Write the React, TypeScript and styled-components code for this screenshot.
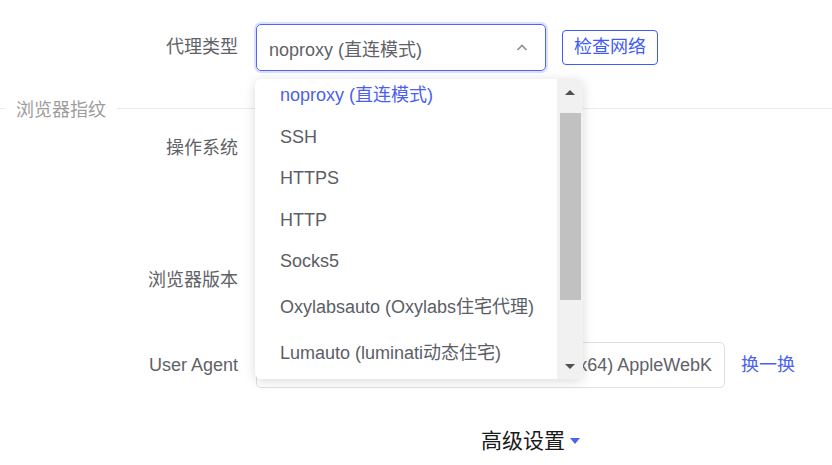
import styled, { createGlobalStyle } from "styled-components";

const GlobalStyle = createGlobalStyle`
  html, body {
    margin: 0;
    padding: 0;
    background: #fff;
  }
  body {
    font-family: "Liberation Sans", "Noto Sans CJK SC", sans-serif;
  }
`;

const options = [
  "noproxy (直连模式)",
  "SSH",
  "HTTPS",
  "HTTP",
  "Socks5",
  "Oxylabsauto (Oxylabs住宅代理)",
  "Lumauto (luminati动态住宅)",
];

const App = () => {
  return (
    <Page>
      <GlobalStyle />
      <FormItem $h={47}>
        <Label>代理类型</Label>
        <SelectBox>
          <SelectText>noproxy (直连模式)</SelectText>
          <svg width="14" height="14" viewBox="0 0 14 14">
            <polyline points="2.5,9 7,4.5 11.5,9" fill="none" stroke="#8e9096" strokeWidth="1.6" />
          </svg>
        </SelectBox>
        <OutlineButton>检查网络</OutlineButton>
      </FormItem>

      <Divider>
        <DividerLine $w="5px" />
        <DividerText>浏览器指纹</DividerText>
        <DividerLine />
      </Divider>

      <FormItem $h={132}>
        <Label>操作系统</Label>
      </FormItem>

      <FormItem $h={85}>
        <Label>浏览器版本</Label>
      </FormItem>

      <FormItem $h={46}>
        <Label>User Agent</Label>
        <TextInput>
          <span>Mozilla/5.0 (Windows NT 10.0; Win64; x64) AppleWebK</span>
        </TextInput>
        <LinkText>换一换</LinkText>
      </FormItem>

      <Advanced>
        高级设置
        <Caret />
      </Advanced>

      <Dropdown>
        <OptionList>
          {options.map((o, i) => (
            <Option key={o} $active={i === 0} $extra={i >= 5}>
              {o}
            </Option>
          ))}
        </OptionList>
        <ScrollBar>
          <ScrollArrow>
            <Tri $down={false} />
          </ScrollArrow>
          <Thumb />
          <Spacer />
          <ScrollArrow>
            <Tri $down />
          </ScrollArrow>
        </ScrollBar>
      </Dropdown>
    </Page>
  );
};

const Page = styled.div`
  position: relative;
  width: 832px;
  height: 465px;
  overflow: hidden;
  padding-top: 24px;
  box-sizing: border-box;
`;

const FormItem = styled.div<{ $h: number }>`
  display: flex;
  align-items: flex-start;
  min-height: ${(p) => p.$h}px;
`;

const Label = styled.div`
  width: 256px;
  padding-right: 18px;
  box-sizing: border-box;
  text-align: right;
  font-size: 18px;
  line-height: 46px;
  color: #606266;
  flex-shrink: 0;
`;

const SelectBox = styled.div`
  width: 290px;
  height: 47px;
  box-sizing: border-box;
  border: 1px solid #4f66f0;
  border-radius: 5px;
  box-shadow: 0 0 0 2px rgba(79, 102, 240, 0.2);
  display: flex;
  align-items: center;
  padding: 0 16px 0 12px;
  color: #606266;
  font-size: 18px;
`;

const SelectText = styled.span`
  flex: 1;
`;

const OutlineButton = styled.div`
  margin: 6px 0 0 16px;
  height: 35px;
  box-sizing: border-box;
  padding: 0 11px;
  border: 1px solid #3e5cf5;
  border-radius: 4px;
  color: #3e5cf5;
  font-size: 18px;
  line-height: 33px;
`;

const Divider = styled.div`
  display: flex;
  align-items: center;
  height: 24px;
  margin: 25px 0 5px;
`;

const DividerLine = styled.div<{ $w?: string }>`
  height: 1px;
  background: #ebebeb;
  ${(p) => (p.$w ? `width: ${p.$w};` : "flex: 1;")}
`;

const DividerText = styled.span`
  padding: 0 11px;
  font-size: 18px;
  color: #9d9d9d;
`;

const TextInput = styled.div`
  width: 469px;
  height: 46px;
  box-sizing: border-box;
  border: 1px solid #dcdfe6;
  border-radius: 5px;
  padding: 0 12px;
  display: flex;
  align-items: center;
  justify-content: flex-end;
  overflow: hidden;
  white-space: nowrap;
  color: #606266;
  font-size: 18px;
`;

const LinkText = styled.span`
  margin-left: 16px;
  font-size: 18px;
  line-height: 46px;
  color: #4a63f3;
`;

const Advanced = styled.div`
  display: flex;
  align-items: center;
  gap: 5px;
  margin: 42px 0 0 481px;
  font-size: 21px;
  line-height: 22px;
  color: #1a1a1a;
`;

const Caret = styled.span`
  width: 0;
  height: 0;
  border-left: 5px solid transparent;
  border-right: 5px solid transparent;
  border-top: 6px solid #4a63f3;
`;

const Dropdown = styled.div`
  position: absolute;
  top: 79px;
  left: 255px;
  width: 328px;
  height: 300px;
  background: #fff;
  border-radius: 6px;
  box-shadow: 0 2px 12px rgba(0, 0, 0, 0.15);
  overflow: hidden;
  display: flex;
`;

const OptionList = styled.div`
  flex: 1;
  margin-top: -4px;
`;

const Option = styled.div<{ $active: boolean; $extra: boolean }>`
  height: 41.5px;
  line-height: 41.5px;
  padding-left: 25px;
  margin-top: ${(p) => (p.$extra ? "4.5px" : "0")};
  font-size: 18px;
  white-space: nowrap;
  color: ${(p) => (p.$active ? "#4a5ff0" : "#5b5e66")};
`;

const ScrollBar = styled.div`
  width: 26px;
  background: #f1f1f1;
  display: flex;
  flex-direction: column;
  align-items: center;
`;

const ScrollArrow = styled.div`
  height: 26px;
  width: 100%;
  display: flex;
  align-items: center;
  justify-content: center;
`;

const Tri = styled.span<{ $down: boolean }>`
  width: 0;
  height: 0;
  border-left: 5px solid transparent;
  border-right: 5px solid transparent;
  ${(p) =>
    p.$down ? "border-top: 5px solid #505050;" : "border-bottom: 5px solid #505050;"}
`;

const Thumb = styled.div`
  margin-top: 8px;
  width: 21px;
  height: 187px;
  background: #c1c1c1;
`;

const Spacer = styled.div`
  flex: 1;
`;

export default App;
